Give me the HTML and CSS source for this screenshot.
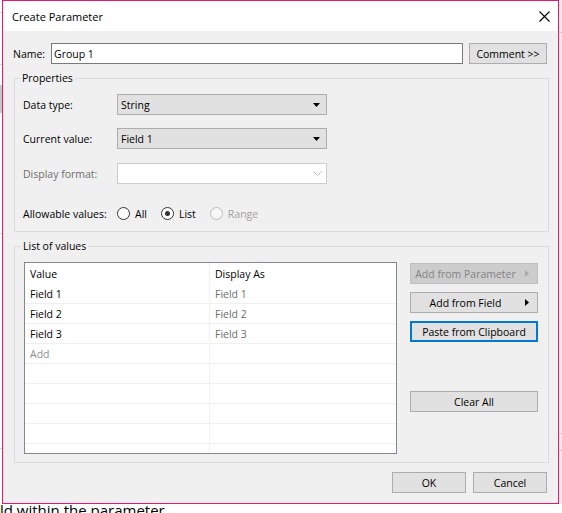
FILE: index.html
```html
<!DOCTYPE html>
<html lang="en">
<head>
<meta charset="utf-8">
<title>Create Parameter</title>
<link rel="stylesheet" href="styles.css">
</head>
<body>
<div class="screen">
  <div class="strip-left"></div>
  <div class="dialog">
    <div class="titlebar">
      <span class="title">Create Parameter</span>
      <svg class="close" width="11" height="11" viewBox="0 0 11 11"><path d="M0.5 0.5 L10.5 10.5 M10.5 0.5 L0.5 10.5" stroke="#000" stroke-width="1.1" fill="none"/></svg>
    </div>
    <div class="body">
      <div class="name-row">
        <span class="name-label">Name:</span>
        <div class="name-input">Group 1</div>
        <div class="btn comment-btn">Comment &gt;&gt;</div>
      </div>

      <fieldset class="group props">
        <legend>Properties</legend>
        <div class="prop-row">
          <span class="prop-label">Data type:</span>
          <div class="select">
            <span>String</span>
            <svg width="7" height="4" viewBox="0 0 7 4"><polygon points="0,0 7,0 3.5,4" fill="#000"/></svg>
          </div>
        </div>
        <div class="prop-row">
          <span class="prop-label">Current value:</span>
          <div class="select">
            <span>Field 1</span>
            <svg width="7" height="4" viewBox="0 0 7 4"><polygon points="0,0 7,0 3.5,4" fill="#000"/></svg>
          </div>
        </div>
        <div class="prop-row row-display">
          <span class="prop-label disabled">Display format:</span>
          <div class="select select-disabled">
            <span></span>
            <svg width="9" height="5" viewBox="0 0 9 5"><polyline points="0.5,0.5 4.5,4.5 8.5,0.5" fill="none" stroke="#bcbcbc" stroke-width="1"/></svg>
          </div>
        </div>
        <div class="prop-row row-allow">
          <span class="prop-label">Allowable values:</span>
          <div class="opt"><span class="radio"></span><span>All</span></div>
          <div class="opt"><span class="radio on"></span><span>List</span></div>
          <div class="opt off"><span class="radio"></span><span>Range</span></div>
        </div>
      </fieldset>

      <fieldset class="group values">
        <legend>List of values</legend>
        <div class="values-inner">
          <div class="table">
            <div class="tr head"><div class="td">Value</div><div class="td">Display As</div></div>
            <div class="tr"><div class="td">Field 1</div><div class="td alt">Field 1</div></div>
            <div class="tr"><div class="td">Field 2</div><div class="td alt">Field 2</div></div>
            <div class="tr"><div class="td">Field 3</div><div class="td alt">Field 3</div></div>
            <div class="tr"><div class="td add">Add</div><div class="td"></div></div>
            <div class="tr"><div class="td"></div><div class="td"></div></div>
            <div class="tr"><div class="td"></div><div class="td"></div></div>
            <div class="tr"><div class="td"></div><div class="td"></div></div>
            <div class="tr"><div class="td"></div><div class="td"></div></div>
            <div class="tr"><div class="td"></div><div class="td"></div></div>
          </div>
          <div class="side">
            <div class="btn menu-btn btn-disabled">
              <span class="lbl">Add from Parameter</span>
              <svg class="tri" width="4" height="7" viewBox="0 0 4 7"><polygon points="0,0 4,3.5 0,7" fill="#a9a9a9"/></svg>
            </div>
            <div class="btn menu-btn">
              <span class="lbl">Add from Field</span>
              <svg class="tri" width="4" height="7" viewBox="0 0 4 7"><polygon points="0,0 4,3.5 0,7" fill="#000"/></svg>
            </div>
            <div class="btn btn-focus">Paste from Clipboard</div>
            <div class="btn clear-btn">Clear All</div>
          </div>
        </div>
      </fieldset>

      <div class="footer">
        <div class="btn foot-btn">OK</div>
        <div class="btn foot-btn">Cancel</div>
      </div>
    </div>
  </div>
  <div class="strip-right"></div>
</div>
<div class="under">ld within the parameter</div>
</body>
</html>
```

FILE: styles.css
```css
* { box-sizing: border-box; }

body {
  margin: 0;
  width: 562px;
  height: 513px;
  overflow: hidden;
  background: #ffffff;
  font-family: "Open Sans", "Liberation Sans", sans-serif;
  font-size: 10.5px;
  color: #000;
}

.screen {
  display: flex;
  height: 504px;
}

.strip-left {
  width: 2px;
  background-color: #fbfbfb;
  background-image:
    linear-gradient(#d6d6d6, #d6d6d6),
    linear-gradient(#d6d6d6, #d6d6d6),
    linear-gradient(#c8c8c8, #c8c8c8),
    linear-gradient(#d6d6d6, #d6d6d6),
    linear-gradient(#d6d6d6, #d6d6d6);
  background-repeat: no-repeat;
  background-size: 2px 1px, 2px 1px, 2px 28px, 2px 1px, 2px 1px;
  background-position: 0 12px, 0 64px, 0 85px, 0 233px, 0 448px;
}

.strip-right {
  flex: 1;
  background-color: #ececec;
  background-image:
    linear-gradient(#cfcfcf, #cfcfcf),
    linear-gradient(#cfcfcf, #cfcfcf),
    linear-gradient(#cfcfcf, #cfcfcf);
  background-repeat: no-repeat;
  background-size: 100% 1px;
  background-position: 0 32px, 0 433px, 0 450px;
}

.dialog {
  width: 557px;
  height: 504px;
  border: 1px solid #e8176f;
  background: #f0f0f0;
  display: flex;
  flex-direction: column;
}

.titlebar {
  height: 30px;
  background: #ffffff;
  display: flex;
  align-items: center;
  justify-content: space-between;
  padding: 0 8px 0 9px;
  flex: none;
}

.title {
  font-size: 11px;
  color: #000;
}

.close { display: block; }

.body {
  flex: 1;
  padding: 12px 9px 0 11px;
  display: flex;
  flex-direction: column;
}

.name-row {
  display: flex;
  align-items: center;
  height: 21px;
  margin-right: 2px;
}

.name-label {
  width: 38px;
  margin-left: -1px;
}

.name-input {
  width: 412px;
  height: 21px;
  border: 1px solid #7a7a7a;
  background: #ffffff;
  padding: 0 2px;
  display: flex;
  align-items: center;
}

.btn {
  height: 21px;
  border: 1px solid #adadad;
  background: #e1e1e1;
  display: flex;
  align-items: center;
  justify-content: center;
  white-space: nowrap;
}

.comment-btn {
  margin-left: 6px;
  width: 78px;
}

.group {
  margin: 7px 0 0 0;
  border: 1px solid #dcdcdc;
  min-width: 0;
}

.group legend {
  padding: 0 2px;
  margin-left: -3px;
  line-height: 14px;
  font-size: 10.5px;
}

.props {
  padding: 9px 0 7px 8px;
}

.prop-row {
  display: flex;
  align-items: center;
  height: 21px;
}

.prop-row + .prop-row { margin-top: 13px; }
.prop-row.row-display { margin-top: 14px; }
.prop-row.row-allow { margin-top: 19px; }

.prop-label { width: 94px; flex: none; }
.disabled { color: #6d6d6d; }

.select {
  width: 210px;
  height: 21px;
  border: 1px solid #adadad;
  background: #e1e1e1;
  padding: 0 6px 0 3px;
  display: flex;
  align-items: center;
  justify-content: space-between;
}

.select svg { display: block; }

.select-disabled {
  background: #ffffff;
  border-color: #cccccc;
  padding-right: 4px;
}

.opt {
  display: flex;
  align-items: center;
  gap: 5px;
  margin-right: 14px;
}

.opt.off { color: #a0a0a0; }

.radio {
  width: 13px;
  height: 13px;
  border-radius: 50%;
  border: 1px solid #333333;
  background: #ffffff;
  display: flex;
  align-items: center;
  justify-content: center;
}

.radio.on::after {
  content: "";
  width: 5px;
  height: 5px;
  border-radius: 50%;
  background: #333333;
}

.opt.off .radio {
  border-color: #bcbcbc;
  background: #f7f7f7;
}

.values {
  padding: 9px 10px 8px 9px;
}

.values-inner {
  display: flex;
  align-items: flex-start;
}

.table {
  width: 373px;
  height: 192px;
  border: 1px solid #828790;
  background: #ffffff;
  overflow: hidden;
  flex: none;
}

.tr {
  display: grid;
  grid-template-columns: 185px 1fr;
  height: 20px;
  border-bottom: 1px solid #f0f0f0;
}

.tr.head {
  height: 21px;
  border-bottom: 0;
}

.td {
  padding-left: 5px;
  display: flex;
  align-items: center;
}

.td:first-child { border-right: 1px solid #f0f0f0; }
.td.alt { color: #6d6d6d; }
.td.add { color: #8e8e8e; }

.side {
  margin-left: 13px;
  width: 128px;
  padding-top: 1px;
  display: flex;
  flex-direction: column;
  gap: 8px;
}

.menu-btn {
  justify-content: flex-start;
  padding-right: 8px;
}

.menu-btn .lbl {
  flex: 1;
  text-align: center;
}

.menu-btn .tri {
  display: block;
  margin-left: 5px;
}

.btn-disabled {
  background: #cccccc;
  border-color: #bfbfbf;
  color: #838383;
}

.btn-focus {
  border: 2px solid #0078d7;
}

.clear-btn { margin-top: 41px; }

.footer {
  margin-top: 9px;
  margin-right: 2px;
  display: flex;
  justify-content: flex-end;
  gap: 7px;
}

.foot-btn { width: 74px; }

.under {
  font-size: 15px;
  line-height: 15px;
  margin-top: -1px;
  white-space: nowrap;
  color: #000;
}
```
